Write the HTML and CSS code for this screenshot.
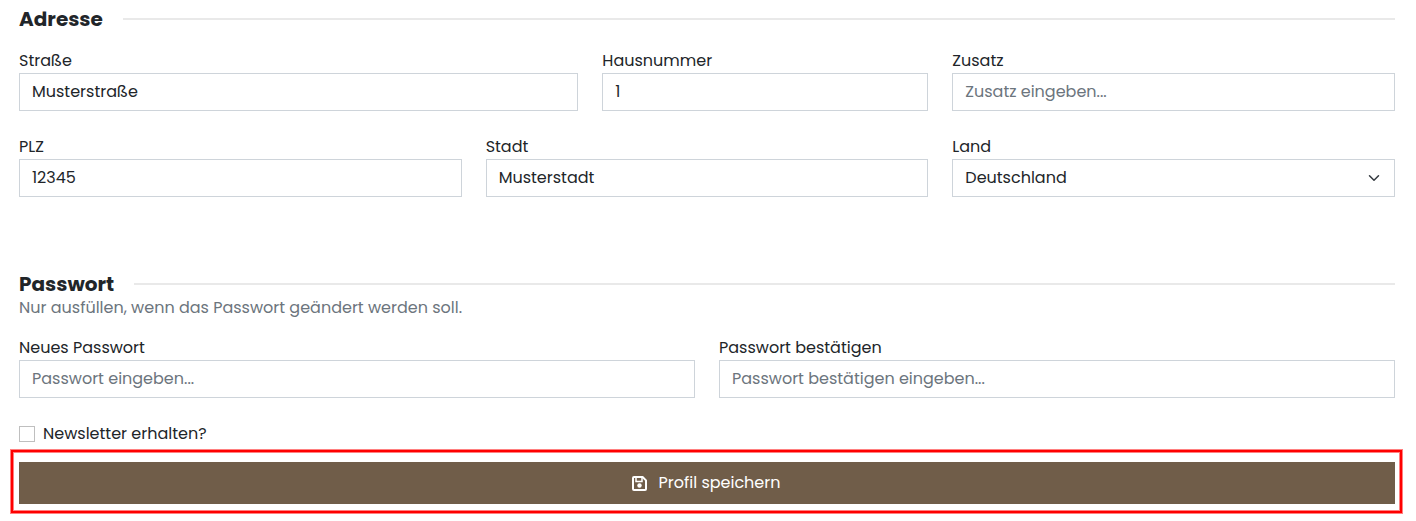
FILE: index.html
```html
<!DOCTYPE html>
<html lang="de">
<head>
  <meta charset="UTF-8">
  <meta name="viewport" content="width=device-width, initial-scale=1.0">
  <title>Profil</title>
  <link rel="stylesheet" href="styles.css">
</head>
<body>
  <form class="profile">
    <section class="address">
      <h2 class="section-title">Adresse</h2>
      <div class="row">
        <div class="field col-5">
          <label for="street">Straße</label>
          <input type="text" id="street" value="Musterstraße">
        </div>
        <div class="field col-3">
          <label for="number">Hausnummer</label>
          <input type="text" id="number" value="1">
        </div>
        <div class="field col-4">
          <label for="extra">Zusatz</label>
          <input type="text" id="extra" placeholder="Zusatz eingeben...">
        </div>
        <div class="field col-4">
          <label for="zip">PLZ</label>
          <input type="text" id="zip" value="12345">
        </div>
        <div class="field col-4">
          <label for="city">Stadt</label>
          <input type="text" id="city" value="Musterstadt">
        </div>
        <div class="field col-4">
          <label for="country">Land</label>
          <select id="country">
            <option selected>Deutschland</option>
          </select>
        </div>
      </div>
    </section>

    <section class="password">
      <h2 class="section-title">Passwort</h2>
      <p class="hint">Nur ausfüllen, wenn das Passwort geändert werden soll.</p>
      <div class="row">
        <div class="field col-6">
          <label for="password">Neues Passwort</label>
          <input type="password" id="password" placeholder="Passwort eingeben...">
        </div>
        <div class="field col-6">
          <label for="password-repeat">Passwort bestätigen</label>
          <input type="password" id="password-repeat" placeholder="Passwort bestätigen eingeben...">
        </div>
      </div>
    </section>

    <div class="check">
      <input type="checkbox" id="newsletter">
      <label for="newsletter">Newsletter erhalten?</label>
    </div>

    <div class="submit">
      <button type="submit" class="save-button">
        <svg class="save-icon" viewBox="0 0 15 15" aria-hidden="true">
          <path fill="none" stroke="currentColor" stroke-width="2" stroke-linejoin="round" d="M2 1h8.6L14 4.400V13a1 1 0 0 1-1 1H2a1 1 0 0 1-1-1V2a1 1 0 0 1 1-1z"/>
          <path fill="none" stroke="currentColor" stroke-width="1.500" d="M4 1v4.500h6V1"/>
          <circle fill="currentColor" cx="7.500" cy="9.500" r="2.200"/>
        </svg>
        Profil speichern
      </button>
    </div>
  </form>
</body>
</html>
```

FILE: styles.css
```css
* {
  box-sizing: border-box;
}

body {
  margin: 0;
  background-color: #fff;
  color: #212529;
  font-family: 'Poppins', 'Inter', sans-serif;
  font-size: 16px;
  line-height: 24px;
}

.profile {
  padding: 7px 21px 17px 19px;
}

.section-title {
  display: flex;
  align-items: center;
  gap: 20px;
  margin: 0;
  font-size: 20px;
  font-weight: 700;
  line-height: 24px;
}

/* line to the right of the heading */
.section-title::after {
  content: "";
  flex: 1;
  height: 2px;
  background-color: #e9e9e9;
}

.row {
  display: grid;
  grid-template-columns: repeat(12, 1fr);
  gap: 24px;
  padding-top: 16px;
}

.address .row {
  padding-top: 18px;
}

.col-3 { grid-column: span 3; }
.col-4 { grid-column: span 4; }
.col-5 { grid-column: span 5; }
.col-6 { grid-column: span 6; }

.field {
  display: flex;
  flex-direction: column;
  min-width: 0;
}

.field input,
.field select {
  width: 100%;
  height: 38px;
  padding: 0 12px;
  border: 1px solid #ced4da;
  border-radius: 0;
  background-color: #fff;
  color: #212529;
  font: inherit;
}

.field input {
  padding-bottom: 2px;
}

.field input::placeholder {
  color: #6c757d;
  opacity: 1;
}

.field select {
  appearance: none;
  background-image: url("data:image/svg+xml,%3csvg xmlns='http://www.w3.org/2000/svg' viewBox='0 0 16 16'%3e%3cpath fill='none' stroke='%23343a40' stroke-linecap='round' stroke-linejoin='round' stroke-width='2' d='m2 5 6 6 6-6'/%3e%3c/svg%3e");
  background-repeat: no-repeat;
  background-position: right 12px center;
  background-size: 16px 12px;
}

.password {
  margin-top: 75px;
}

.hint {
  margin: 0;
  color: #6c757d;
}

.check {
  display: flex;
  align-items: center;
  gap: 8px;
  margin-top: 24px;
}

.check input {
  appearance: none;
  width: 16px;
  height: 16px;
  margin: 0;
  border: 1px solid #bfbfbf;
  background-color: #fff;
}

.check input:checked {
  background-color: #705d49;
}

.submit {
  position: relative;
  margin-top: 16px;
}

/* red frame around the save button */
.submit::after {
  content: "";
  position: absolute;
  inset: -12px -7px -9px -8px;
  border: 2px solid #f00;
  box-shadow: 0 0 0 1px #ff8080, inset 0 0 0 1px #ff8080;
  pointer-events: none;
}

.save-button {
  display: flex;
  align-items: center;
  justify-content: center;
  gap: 12px;
  width: 100%;
  height: 42px;
  padding: 0 2px 0 0;
  border: none;
  background-color: #705d49;
  color: #fff;
  font: inherit;
  cursor: pointer;
}

.save-icon {
  width: 15px;
  height: 15px;
}
```
